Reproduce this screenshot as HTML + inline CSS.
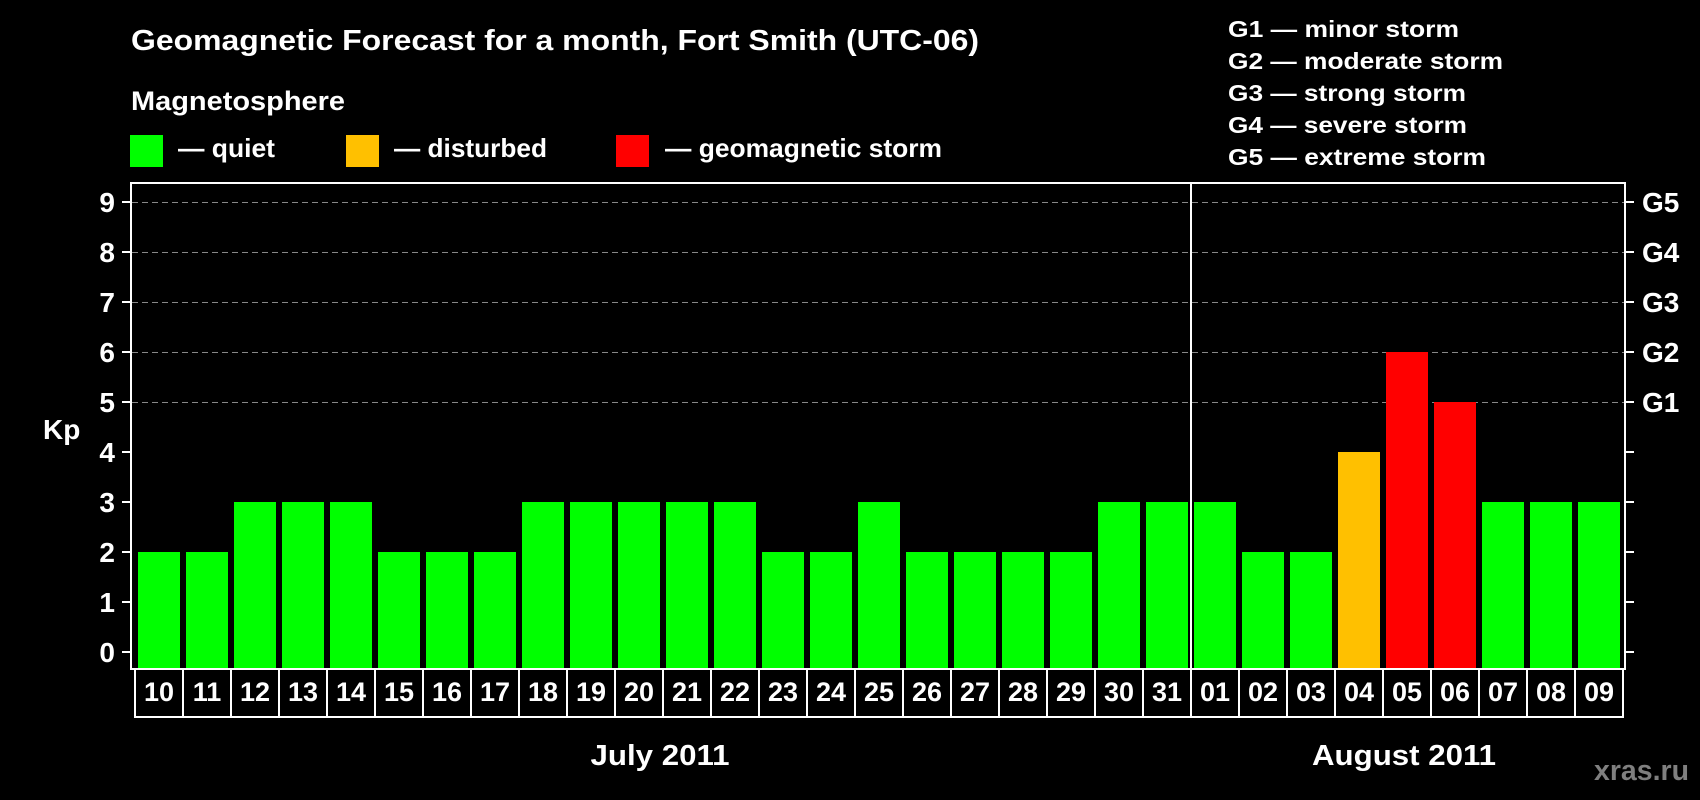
<!DOCTYPE html>
<html><head><meta charset="utf-8"><style>html,body{margin:0;padding:0;background:#000;}svg{display:block}</style></head>
<body>
<svg width="1700" height="800" viewBox="0 0 1700 800" xmlns="http://www.w3.org/2000/svg" font-family="Liberation Sans, Arial, sans-serif" font-weight="bold" fill="#fff">
<rect width="1700" height="800" fill="#000"/>
<text x="131" y="50" font-size="29" textLength="848" lengthAdjust="spacingAndGlyphs">Geomagnetic Forecast for a month, Fort Smith (UTC-06)</text>
<text x="131" y="110" font-size="27" textLength="214" lengthAdjust="spacingAndGlyphs">Magnetosphere</text>
<rect x="130" y="135" width="33" height="32" fill="#00ff00"/>
<text x="178" y="157" font-size="26" textLength="97" lengthAdjust="spacingAndGlyphs">— quiet</text>
<rect x="346" y="135" width="33" height="32" fill="#ffc000"/>
<text x="394" y="157" font-size="26" textLength="153" lengthAdjust="spacingAndGlyphs">— disturbed</text>
<rect x="616" y="135" width="33" height="32" fill="#ff0000"/>
<text x="665" y="157" font-size="26" textLength="277" lengthAdjust="spacingAndGlyphs">— geomagnetic storm</text>
<g font-size="23">
<text x="1228" y="37" textLength="231" lengthAdjust="spacingAndGlyphs">G1 — minor storm</text>
<text x="1228" y="69" textLength="275" lengthAdjust="spacingAndGlyphs">G2 — moderate storm</text>
<text x="1228" y="101" textLength="238" lengthAdjust="spacingAndGlyphs">G3 — strong storm</text>
<text x="1228" y="133" textLength="239" lengthAdjust="spacingAndGlyphs">G4 — severe storm</text>
<text x="1228" y="165" textLength="258" lengthAdjust="spacingAndGlyphs">G5 — extreme storm</text>
</g>
<g stroke="#888" stroke-width="1" stroke-dasharray="6,4">
<line x1="132" y1="202.5" x2="1624" y2="202.5"/>
<line x1="132" y1="252.5" x2="1624" y2="252.5"/>
<line x1="132" y1="302.5" x2="1624" y2="302.5"/>
<line x1="132" y1="352.5" x2="1624" y2="352.5"/>
<line x1="132" y1="402.5" x2="1624" y2="402.5"/>
</g>
<g fill="#00ff00">
<rect x="138" y="552" width="42" height="117"/>
<rect x="186" y="552" width="42" height="117"/>
<rect x="234" y="502" width="42" height="167"/>
<rect x="282" y="502" width="42" height="167"/>
<rect x="330" y="502" width="42" height="167"/>
<rect x="378" y="552" width="42" height="117"/>
<rect x="426" y="552" width="42" height="117"/>
<rect x="474" y="552" width="42" height="117"/>
<rect x="522" y="502" width="42" height="167"/>
<rect x="570" y="502" width="42" height="167"/>
<rect x="618" y="502" width="42" height="167"/>
<rect x="666" y="502" width="42" height="167"/>
<rect x="714" y="502" width="42" height="167"/>
<rect x="762" y="552" width="42" height="117"/>
<rect x="810" y="552" width="42" height="117"/>
<rect x="858" y="502" width="42" height="167"/>
<rect x="906" y="552" width="42" height="117"/>
<rect x="954" y="552" width="42" height="117"/>
<rect x="1002" y="552" width="42" height="117"/>
<rect x="1050" y="552" width="42" height="117"/>
<rect x="1098" y="502" width="42" height="167"/>
<rect x="1146" y="502" width="42" height="167"/>
<rect x="1194" y="502" width="42" height="167"/>
<rect x="1242" y="552" width="42" height="117"/>
<rect x="1290" y="552" width="42" height="117"/>
<rect x="1482" y="502" width="42" height="167"/>
<rect x="1530" y="502" width="42" height="167"/>
<rect x="1578" y="502" width="42" height="167"/>
</g>
<rect x="1338" y="452" width="42" height="217" fill="#ffc000"/>
<rect x="1386" y="352" width="42" height="317" fill="#ff0000"/>
<rect x="1434" y="402" width="42" height="267" fill="#ff0000"/>
<rect x="131" y="183" width="1494" height="486" fill="none" stroke="#fff" stroke-width="2"/>
<line x1="1191" y1="183" x2="1191" y2="669" stroke="#fff" stroke-width="2"/>
<g stroke="#fff" stroke-width="2">
<line x1="122" y1="652" x2="131" y2="652"/><line x1="1625" y1="652" x2="1634" y2="652"/>
<line x1="122" y1="602" x2="131" y2="602"/><line x1="1625" y1="602" x2="1634" y2="602"/>
<line x1="122" y1="552" x2="131" y2="552"/><line x1="1625" y1="552" x2="1634" y2="552"/>
<line x1="122" y1="502" x2="131" y2="502"/><line x1="1625" y1="502" x2="1634" y2="502"/>
<line x1="122" y1="452" x2="131" y2="452"/><line x1="1625" y1="452" x2="1634" y2="452"/>
<line x1="122" y1="402" x2="131" y2="402"/><line x1="1625" y1="402" x2="1634" y2="402"/>
<line x1="122" y1="352" x2="131" y2="352"/><line x1="1625" y1="352" x2="1634" y2="352"/>
<line x1="122" y1="302" x2="131" y2="302"/><line x1="1625" y1="302" x2="1634" y2="302"/>
<line x1="122" y1="252" x2="131" y2="252"/><line x1="1625" y1="252" x2="1634" y2="252"/>
<line x1="122" y1="202" x2="131" y2="202"/><line x1="1625" y1="202" x2="1634" y2="202"/>
</g>
<g font-size="28" text-anchor="end">
<text x="115" y="662">0</text><text x="115" y="612">1</text><text x="115" y="562">2</text><text x="115" y="512">3</text><text x="115" y="462">4</text>
<text x="115" y="412">5</text><text x="115" y="362">6</text><text x="115" y="312">7</text><text x="115" y="262">8</text><text x="115" y="212">9</text>
</g>
<g font-size="28">
<text x="1642" y="412">G1</text><text x="1642" y="362">G2</text><text x="1642" y="312">G3</text><text x="1642" y="262">G4</text><text x="1642" y="212">G5</text>
</g>
<text x="43" y="439" font-size="28">Kp</text>
<g font-size="27" text-anchor="middle">
<text x="159" y="701">10</text><text x="207" y="701">11</text><text x="255" y="701">12</text><text x="303" y="701">13</text><text x="351" y="701">14</text>
<text x="399" y="701">15</text><text x="447" y="701">16</text><text x="495" y="701">17</text><text x="543" y="701">18</text><text x="591" y="701">19</text>
<text x="639" y="701">20</text><text x="687" y="701">21</text><text x="735" y="701">22</text><text x="783" y="701">23</text><text x="831" y="701">24</text>
<text x="879" y="701">25</text><text x="927" y="701">26</text><text x="975" y="701">27</text><text x="1023" y="701">28</text><text x="1071" y="701">29</text>
<text x="1119" y="701">30</text><text x="1167" y="701">31</text><text x="1215" y="701">01</text><text x="1263" y="701">02</text><text x="1311" y="701">03</text>
<text x="1359" y="701">04</text><text x="1407" y="701">05</text><text x="1455" y="701">06</text><text x="1503" y="701">07</text><text x="1551" y="701">08</text><text x="1599" y="701">09</text>
</g>
<rect x="135" y="669" width="1488" height="48" fill="none" stroke="#fff" stroke-width="2"/>
<g stroke="#fff" stroke-width="2">
<line x1="183" y1="669" x2="183" y2="717"/><line x1="231" y1="669" x2="231" y2="717"/><line x1="279" y1="669" x2="279" y2="717"/><line x1="327" y1="669" x2="327" y2="717"/>
<line x1="375" y1="669" x2="375" y2="717"/><line x1="423" y1="669" x2="423" y2="717"/><line x1="471" y1="669" x2="471" y2="717"/><line x1="519" y1="669" x2="519" y2="717"/>
<line x1="567" y1="669" x2="567" y2="717"/><line x1="615" y1="669" x2="615" y2="717"/><line x1="663" y1="669" x2="663" y2="717"/><line x1="711" y1="669" x2="711" y2="717"/>
<line x1="759" y1="669" x2="759" y2="717"/><line x1="807" y1="669" x2="807" y2="717"/><line x1="855" y1="669" x2="855" y2="717"/><line x1="903" y1="669" x2="903" y2="717"/>
<line x1="951" y1="669" x2="951" y2="717"/><line x1="999" y1="669" x2="999" y2="717"/><line x1="1047" y1="669" x2="1047" y2="717"/><line x1="1095" y1="669" x2="1095" y2="717"/>
<line x1="1143" y1="669" x2="1143" y2="717"/><line x1="1191" y1="669" x2="1191" y2="717"/><line x1="1239" y1="669" x2="1239" y2="717"/><line x1="1287" y1="669" x2="1287" y2="717"/>
<line x1="1335" y1="669" x2="1335" y2="717"/><line x1="1383" y1="669" x2="1383" y2="717"/><line x1="1431" y1="669" x2="1431" y2="717"/><line x1="1479" y1="669" x2="1479" y2="717"/>
<line x1="1527" y1="669" x2="1527" y2="717"/><line x1="1575" y1="669" x2="1575" y2="717"/>
</g>
<text x="660" y="765" font-size="29" text-anchor="middle" textLength="139" lengthAdjust="spacingAndGlyphs">July 2011</text>
<text x="1404" y="765" font-size="29" text-anchor="middle" textLength="184" lengthAdjust="spacingAndGlyphs">August 2011</text>
<text x="1594" y="780" font-size="29" fill="#7f7f7f" textLength="95" lengthAdjust="spacingAndGlyphs">xras.ru</text>
</svg>
</body></html>
